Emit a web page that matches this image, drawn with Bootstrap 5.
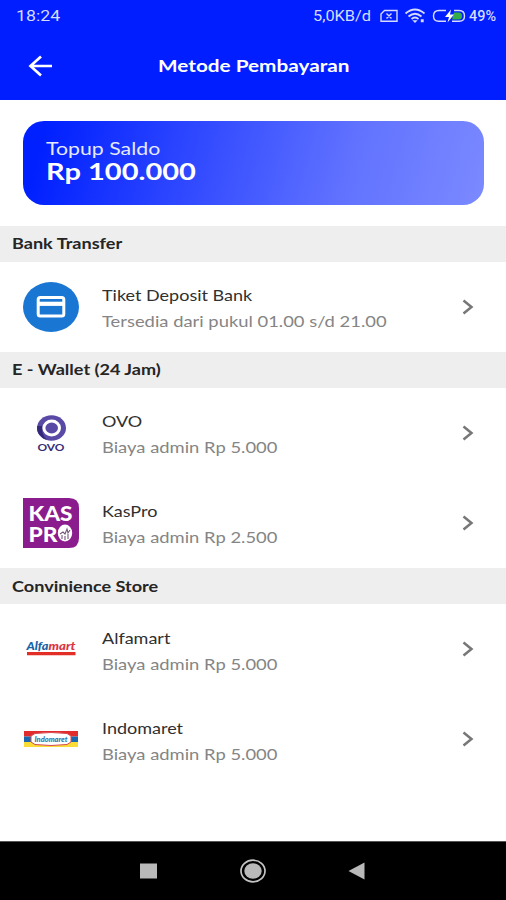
<!DOCTYPE html>
<html lang="id">
<head>
<meta charset="utf-8">
<meta name="viewport" content="width=device-width, initial-scale=1">
<title>Metode Pembayaran</title>
<link href="https://cdn.jsdelivr.net/npm/bootstrap@5.3.0/dist/css/bootstrap.min.css" rel="stylesheet">
<style>
  body { font-family: Lato, "Open Sans", sans-serif; background: #fff; color: #303030; }
  .screen { width: 506px; height: 900px; }
  .topbar { height: 100px; background: #001eff; }
  .statusbar { height: 31px; padding: 0 10px 0 16px; font-family: Roboto, sans-serif; font-size: 15px; color: #d5dcff; }
  .titlebar { height: 69px; padding-left: 27px; }
  .wide { display: inline-block; white-space: nowrap; line-height: 1; transform: scaleX(var(--sx, 1.2)); transform-origin: left center; }
  .clock { --sx: 1.18; padding-top: 2px; }
  .page-title { font-size: 17px; font-weight: 700; margin-left: 105px; padding-bottom: 1px; --sx: 1.22; }
  .saldo { margin: 21px 22px 20.6px 23px; height: 84px; border-radius: 21px; padding: 20px 0 0 23px; background: linear-gradient(105deg, #0020ff 5%, #3d54ff 46%, #6172ff 70%, #7b8aff 100%); }
  .saldo-label { font-size: 16.5px; color: #e6e9ff; --sx: 1.29; }
  .saldo-value { font-size: 22.5px; font-weight: 700; margin-top: 3px; --sx: 1.29; }
  .section-head { height: 36.2px; background: #eee; padding-left: 12px; font-size: 15px; font-weight: 700; color: #252525; --sx: 1.205; }
  .method { height: 90px; padding: 0 32px 0 23px; }
  .logo-box { width: 56px; margin-right: 23px; }
  .method-text { padding-top: 4px; }
  .method-name { font-size: 15px; margin-bottom: 11px; --sx: 1.2; }
  .method-note { font-size: 15px; color: #858585; --sx: 1.225; }
  .keys { height: 59px; background: #000; border-top: 1px solid #555; }
  svg { display: block; flex: none; }
</style>
<script src="https://cdn.jsdelivr.net/npm/bootstrap@5.3.0/dist/js/bootstrap.bundle.min.js"></script>
</head>
<body>
<div class="screen d-flex flex-column overflow-hidden">
  <header class="topbar text-white">
    <div class="statusbar d-flex align-items-center justify-content-between">
      <span class="wide clock">18:24</span>
      <svg width="186" height="22" viewBox="310 5 186 22" fill="none" stroke="#d5dcff" stroke-width="1.4">
        <g fill="#d5dcff" stroke="none" font-family="Roboto, sans-serif">
          <text x="313" y="21" font-size="15" textLength="58" lengthAdjust="spacingAndGlyphs">5,0KB/d</text>
          <text x="469" y="21" font-size="14" font-weight="500" textLength="27" lengthAdjust="spacingAndGlyphs">49%</text>
        </g>
        <path d="M384.500 10.500H397V21.300H381V14Z M386.500 13.500l5 5M391.500 13.500l-5 5"/>
        <path stroke-width="1.8" d="M405.500 13.500Q415 5.500 424.500 13.500M408.500 16.500Q415 11 421.500 16.500M411.500 19Q415 16 418.500 19"/>
        <path fill="#d5dcff" d="M414 21h2l-1 1ZM421.500 20h1.500v1.500h-1.500Z"/>
        <path d="M446 10.500H439Q433.500 10.500 433.500 16T439 21.300H446M454 10.500H459Q464.500 10.500 464.500 16T459 21.300H452"/>
        <path stroke="none" fill="#35ad46" d="M454 12.500h5q3 0 3 3.500t-3 3.500h-7z"/>
        <path stroke="none" fill="#fff" d="M451 9.500l-6 7.500h4l-1.500 5.500 6.500-8h-4z"/>
      </svg>
    </div>
    <div class="titlebar d-flex align-items-center">
      <svg width="26" height="24" viewBox="0 0 26 24" fill="none" stroke="#fff" stroke-width="2.700"><path d="M25 12H3.500M14 2.500L3.500 12L14 21.500"/></svg>
      <h1 class="wide page-title mb-0">Metode Pembayaran</h1>
    </div>
  </header>

  <main class="flex-grow-1">
    <section class="saldo text-white d-flex flex-column align-items-start">
      <span class="wide saldo-label">Topup Saldo</span>
      <strong class="wide saldo-value">Rp 100.000</strong>
    </section>

    <div class="section-head d-flex align-items-center"><span class="wide">Bank Transfer</span></div>
    <a class="method d-flex align-items-center text-decoration-none text-reset" href="#">
      <div class="logo-box">
        <svg width="56" height="50" viewBox="0 0 56 50"><ellipse cx="28" cy="25" rx="28" ry="25" fill="#1976d2"/><rect x="15.200" y="15.500" width="25.600" height="18.500" rx="2" fill="none" stroke="#fff" stroke-width="3"/><path d="M15 21.800h26" stroke="#fff" stroke-width="4.200"/></svg>
      </div>
      <div class="method-text d-flex flex-column align-items-start flex-grow-1"><span class="wide method-name">Tiket Deposit Bank</span><span class="wide method-note">Tersedia dari pukul 01.00 s/d 21.00</span></div>
      <svg width="12" height="16" viewBox="0 0 12 16" fill="none" stroke="#777" stroke-width="2.500"><path d="M1.500 1.500L9.500 8L1.500 14.500"/></svg>
    </a>

    <div class="section-head d-flex align-items-center"><span class="wide">E - Wallet (24 Jam)</span></div>
    <a class="method d-flex align-items-center text-decoration-none text-reset" href="#">
      <div class="logo-box">
        <svg width="56" height="50" viewBox="0 0 56 50"><ellipse cx="28.500" cy="20" rx="14.500" ry="12.800" fill="#5b4aa5"/><path d="M14.200 18A14.500 12.800 0 0 0 24 32Q18 26 19 18Z" fill="#342878"/><ellipse cx="28.700" cy="20" rx="7.800" ry="7" fill="#5b4aa5" stroke="#fff" stroke-width="3"/><text x="14.500" y="42.500" font-family="Lato, sans-serif" font-size="9.500" font-weight="700" fill="#382d75" textLength="27" lengthAdjust="spacingAndGlyphs">OVO</text></svg>
      </div>
      <div class="method-text d-flex flex-column align-items-start flex-grow-1"><span class="wide method-name">OVO</span><span class="wide method-note">Biaya admin Rp 5.000</span></div>
      <svg width="12" height="16" viewBox="0 0 12 16" fill="none" stroke="#777" stroke-width="2.500"><path d="M1.500 1.500L9.500 8L1.500 14.500"/></svg>
    </a>
    <a class="method d-flex align-items-center text-decoration-none text-reset" href="#">
      <div class="logo-box">
        <svg width="56" height="50" viewBox="0 0 56 50"><path d="M0 0H46Q56 0 56 10V40Q56 50 46 50H0Z" fill="#8b1c8d"/><g fill="#fff" font-family="Lato, sans-serif" font-size="21.500" font-weight="900"><text x="5.500" y="22.500" textLength="44" lengthAdjust="spacingAndGlyphs">KAS</text><text x="5.500" y="43.500" textLength="29" lengthAdjust="spacingAndGlyphs">PR</text></g><ellipse cx="42" cy="35" rx="7.200" ry="8.500" fill="#fff"/><path d="M37 36l3-2 2 2 2-5 1 4 2-3M39 37v4M42 38v4M45 36v5" fill="none" stroke="#755579" stroke-width="1.100"/></svg>
      </div>
      <div class="method-text d-flex flex-column align-items-start flex-grow-1"><span class="wide method-name">KasPro</span><span class="wide method-note">Biaya admin Rp 2.500</span></div>
      <svg width="12" height="16" viewBox="0 0 12 16" fill="none" stroke="#777" stroke-width="2.500"><path d="M1.500 1.500L9.500 8L1.500 14.500"/></svg>
    </a>

    <div class="section-head d-flex align-items-center"><span class="wide">Convinience Store</span></div>
    <a class="method d-flex align-items-center text-decoration-none text-reset" href="#">
      <div class="logo-box">
        <svg width="56" height="50" viewBox="0 0 56 50"><g font-family="Lato, sans-serif" font-size="11.500" font-weight="900" font-style="italic"><text x="3.500" y="26.300" fill="#1763a6" textLength="22" lengthAdjust="spacingAndGlyphs">Alfa</text><text x="25.500" y="26.300" fill="#dc3442" textLength="27" lengthAdjust="spacingAndGlyphs">mart</text></g><path d="M4 28H52.500V31.300H4Z" fill="#e32e27"/></svg>
      </div>
      <div class="method-text d-flex flex-column align-items-start flex-grow-1"><span class="wide method-name">Alfamart</span><span class="wide method-note">Biaya admin Rp 5.000</span></div>
      <svg width="12" height="16" viewBox="0 0 12 16" fill="none" stroke="#777" stroke-width="2.500"><path d="M1.500 1.500L9.500 8L1.500 14.500"/></svg>
    </a>
    <a class="method d-flex align-items-center text-decoration-none text-reset" href="#">
      <div class="logo-box">
        <svg width="56" height="50" viewBox="0 0 56 50"><path d="M1 17H55V22.500H1Z" fill="#e12c2d"/><path d="M1 22.500H55V28H1Z" fill="#1768ae"/><path d="M1 28H55V33H1Z" fill="#f9dc35"/><path d="M12 19.500Q28 17.500 44 19.500L48 22V28L44 30.500Q28 32.500 12 30.500L8 28V22Z" fill="#fff" stroke="#d84a4f" stroke-width="1"/><text x="11.500" y="28" font-family="Lato, sans-serif" font-size="8" font-weight="900" font-style="italic" fill="#3277ad" textLength="33" lengthAdjust="spacingAndGlyphs">Indomaret</text></svg>
      </div>
      <div class="method-text d-flex flex-column align-items-start flex-grow-1"><span class="wide method-name">Indomaret</span><span class="wide method-note">Biaya admin Rp 5.000</span></div>
      <svg width="12" height="16" viewBox="0 0 12 16" fill="none" stroke="#777" stroke-width="2.500"><path d="M1.500 1.500L9.500 8L1.500 14.500"/></svg>
    </a>
  </main>

  <nav class="keys d-flex justify-content-center">
    <svg width="226" height="58" viewBox="140 842 226 58"><path d="M140 863.500H157V878.500H140Z" fill="#b9b9b9"/><ellipse cx="253" cy="871" rx="12" ry="10.800" fill="none" stroke="#c4c4c4" stroke-width="1.700"/><ellipse cx="253" cy="871" rx="8.700" ry="7.800" fill="#b9b9b9"/><path d="M364.500 862.500V879.500L348.500 871Z" fill="#b9b9b9"/></svg>
  </nav>
</div>
</body>
</html>
